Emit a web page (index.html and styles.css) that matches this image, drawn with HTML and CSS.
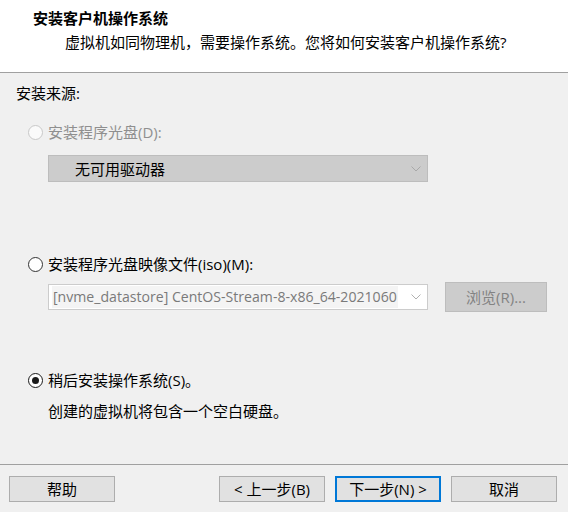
FILE: index.html
```html
<!DOCTYPE html>
<html lang="zh-CN">
<head>
<meta charset="utf-8">
<link rel="stylesheet" href="styles.css">
</head>
<body>
<div class="header">
  <div class="title">安装客户机操作系统</div>
  <div class="subtitle">虚拟机如同物理机，需要操作系统。您将如何安装客户机操作系统?</div>
</div>
<div class="main">
  <div class="section-label">安装来源:</div>

  <div class="radio-row radio-row-1 disabled">
    <span class="radio"></span>
    <span class="radio-text">安装程序光盘(D):</span>
  </div>
  <div class="combo combo-disabled">
    <span class="combo-text">无可用驱动器</span>
    <svg class="chev" width="10" height="6" viewBox="0 0 10 6"><path d="M0.5 0.5 L5 5 L9.5 0.5" fill="none" stroke="#a8a8a8" stroke-width="1"/></svg>
  </div>

  <div class="radio-row radio-row-2">
    <span class="radio"></span>
    <span class="radio-text">安装程序光盘映像文件(iso)(M):</span>
  </div>
  <div class="iso-row">
    <div class="combo combo-iso">
      <span class="iso-text">[nvme_datastore] CentOS-Stream-8-x86_64-2021060</span>
      <svg class="chev" width="10" height="6" viewBox="0 0 10 6"><path d="M0.5 0.5 L5 5 L9.5 0.5" fill="none" stroke="#b0b0b0" stroke-width="1"/></svg>
    </div>
    <div class="browse">浏览(R)...</div>
  </div>

  <div class="radio-row radio-row-3">
    <span class="radio checked"><span class="dot"></span></span>
    <span class="radio-text">稍后安装操作系统(S)。</span>
  </div>
  <div class="desc">创建的虚拟机将包含一个空白硬盘。</div>
</div>
<div class="footer">
  <div class="btn">帮助</div>
  <div class="nav">
    <div class="btn">&lt; 上一步(B)</div>
    <div class="btn primary">下一步(N) &gt;</div>
    <div class="btn">取消</div>
  </div>
</div>
</body>
</html>
```

FILE: styles.css
```css
* { box-sizing: border-box; }
html, body {
  margin: 0;
  padding: 0;
  width: 568px;
  height: 512px;
  overflow: hidden;
  background: #f0f0f0;
  font-family: "Open Sans", "Noto Sans CJK SC", sans-serif;
  font-size: 15px;
  line-height: 20px;
  color: #000;
}
.header {
  background: #fff;
  height: 73px;
  border-bottom: 1px solid #a0a0a0;
  padding-top: 8px;
}
.title {
  font-weight: bold;
  padding-left: 33px;
}
.subtitle {
  padding-left: 65px;
  margin-top: 4px;
}
.main {
  height: 391px;
  padding-top: 10px;
}
.section-label {
  padding-left: 16px;
}
.radio-row {
  display: flex;
  align-items: center;
  padding-left: 28px;
  height: 20px;
}
.radio-row-1 { margin-top: 19px; }
.radio-row-2 { margin-top: 72px; }
.radio-row-3 { margin-top: 58px; }
.radio {
  width: 15px;
  height: 15px;
  border-radius: 50%;
  border: 1.3px solid #333;
  background: #fff;
  margin-right: 5px;
  display: flex;
  align-items: center;
  justify-content: center;
  flex: none;
}
.disabled .radio {
  border-color: #c8c8c8;
  background: #fafafa;
}
.disabled .radio-text { color: #8f8f8f; }
.radio.checked { border-color: #1a1a1a; border-width: 1.5px; }
.dot {
  width: 7px;
  height: 7px;
  border-radius: 50%;
  background: #1a1a1a;
}
.combo {
  position: relative;
  display: flex;
  align-items: center;
  width: 380px;
  margin-left: 48px;
}
.combo-disabled {
  margin-top: 13px;
  height: 27px;
  background: #cccccc;
  border: 1px solid #bdbdbd;
  padding-left: 26px;
}
.chev {
  position: absolute;
  right: 6px;
  top: 50%;
  margin-top: -3px;
}
.iso-row {
  display: flex;
  align-items: center;
  height: 30px;
  margin-top: 8px;
}
.combo-iso {
  height: 26px;
  background: #fff;
  border: 1px solid #cccccc;
  padding-left: 3px;
}
.iso-text {
  white-space: nowrap;
  color: #7a7a7a;
  background: #f4f4f4;
  font-size: 14.1px;
  padding: 1px 1px 1px 1px;
}
.browse {
  margin-left: 17px;
  width: 102px;
  height: 30px;
  background: #cccccc;
  border: 1px solid #bdbdbd;
  color: #838383;
  display: flex;
  align-items: center;
  justify-content: center;
}
.desc {
  padding-left: 48px;
  margin-top: 11px;
}
.footer {
  border-top: 1px solid #a0a0a0;
  padding: 11px 11px 0 9px;
  display: flex;
  justify-content: space-between;
}
.nav {
  display: flex;
  gap: 10px;
}
.btn {
  width: 106px;
  height: 26px;
  background: #e1e1e1;
  border: 1px solid #adadad;
  display: flex;
  align-items: center;
  justify-content: center;
}
.btn.primary {
  border: 2px solid #0078d7;
}
```
